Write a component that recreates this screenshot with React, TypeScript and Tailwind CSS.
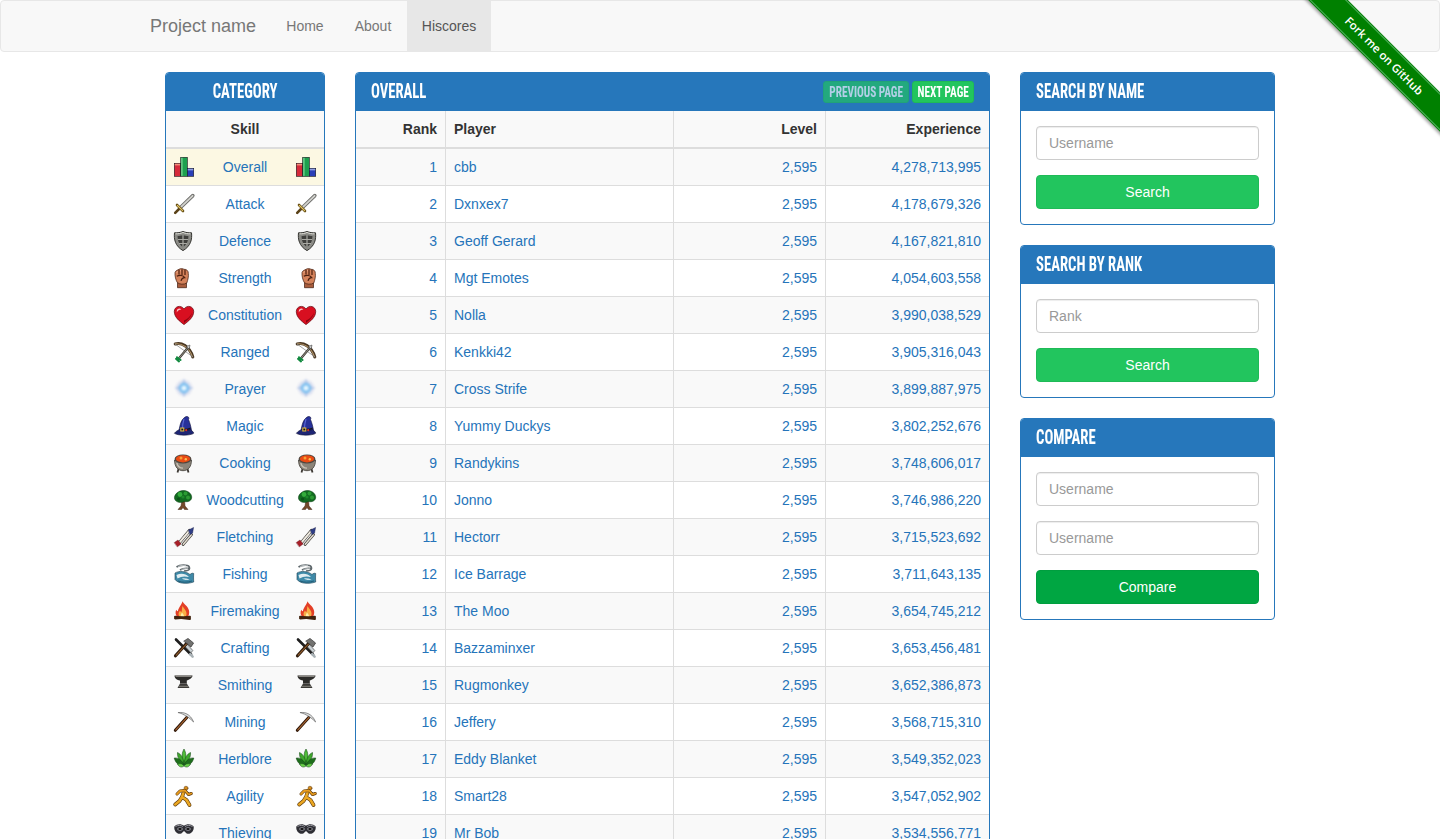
import React from "react";

type IconDef = { w: number; art: React.ReactNode };

// small game style skill icons, drawn on a 20px high box
const icons: Record<string, IconDef> = {
  Overall: {
    w: 20,
    art: (
      <g stroke="#14141c" strokeWidth="0.6">
        <rect x="0.3" y="6.3" width="6.4" height="13" fill="#d62a3a" />
        <rect x="0.8" y="6.8" width="5.4" height="1.6" fill="#f0907a" stroke="none" />
        <rect x="6.7" y="0.3" width="6.6" height="19" fill="#1da04f" />
        <rect x="7.2" y="0.8" width="1.4" height="18" fill="#72cf8e" stroke="none" />
        <rect x="13.3" y="11.3" width="6.4" height="8" fill="#2a3fb8" />
        <rect x="13.8" y="11.8" width="5.4" height="1.6" fill="#8f9ee2" stroke="none" />
      </g>
    ),
  },
  Attack: {
    w: 20,
    art: (
      <g strokeLinecap="round">
        <path d="M6 14 18.8 1.6" stroke="#6f6f6c" strokeWidth="3.6" />
        <path d="M6.3 13.7 18.6 1.8" stroke="#d2d2cd" strokeWidth="1.8" />
        <path d="M3 11 9 17" stroke="#6b5218" strokeWidth="2.6" />
        <path d="M1.2 18.8 5.5 14.5" stroke="#5a4218" strokeWidth="2.6" />
        <path d="M3.4 11.5 8.6 16.6" stroke="#e1c565" strokeWidth="1.1" />
      </g>
    ),
  },
  Defence: {
    w: 18,
    art: (
      <g>
        <path d="M9 0.5C6.5 1.5 3.5 2 0.5 1.8 -0.2 8 1 15 9 19.6 17 15 18.2 8 17.5 1.8 14.5 2 11.5 1.5 9 0.5Z" fill="#8b8b86" stroke="#33332f" />
        <path d="M9 4C7 4.7 5.5 5.1 3.6 5.1 3.6 9 4.6 13.5 9 16.3 13.4 13.5 14.4 9 14.4 5.1 12.5 5.1 11 4.7 9 4Z" fill="#3f3f3c" />
        <path d="M9 4V16M4 8.5H14M5 12.5H13" stroke="#aaaaa4" strokeWidth="1.2" />
        <path d="M1.5 2.8C4 3 7 2.4 9 1.4 11 2.4 14 3 16.5 2.8" fill="none" stroke="#dcdcd6" strokeWidth="1" />
      </g>
    ),
  },
  Strength: {
    w: 15,
    art: (
      <g stroke="#3f1d10" strokeWidth="0.7">
        <path d="M3.5 14.5V19.7H12.5V15Z" fill="#a85d3d" />
        <path d="M1 4.5C1.5 2.5 4 2 5 1.3 6.5 0.2 9 0.6 10 1.3 12.5 1.1 14.6 3 14.3 5.5 14.8 8 14 11.5 12.8 15 10 16.8 5.5 16.5 3.3 14.5 1.8 12 0.7 8 1 4.5Z" fill="#d4825b" />
        <path d="M5 1.8V6.5M8 1.3V7M11 1.8V7M2.8 8.3C5.5 6.8 9.2 7.3 10.7 9.6 8.5 9.5 7.5 11 7 12.8" fill="none" stroke="#4c2010" strokeWidth="1.2" />
        <path d="M2.5 4.5 4 3.5M6 3 7 2.6" stroke="#efb898" strokeWidth="0.8" fill="none" />
      </g>
    ),
  },
  Constitution: {
    w: 20,
    art: (
      <g>
        <path d="M10 19.6C6 16.5 0.3 12.5 0.3 6.5 0.3 1.3 7 -0.6 10 4 13 -0.6 19.7 1.3 19.7 6.5 19.7 12.5 14 16.5 10 19.6Z" fill="#d80f20" stroke="#5f050d" strokeWidth="0.7" />
        <path d="M2.8 5.8C3.3 3.4 6 2.8 7.4 4.5 5.6 4.4 4 5 2.8 7.5Z" fill="#fbc6c9" />
        <path d="M10 18C13.5 15 17.2 12 18 7.8 16.5 11.5 13.5 14 10 15.5Z" fill="#84060f" />
      </g>
    ),
  },
  Ranged: {
    w: 20,
    art: (
      <g fill="none" strokeLinecap="round">
        <path d="M1.2 2C7 0 15.5 4 18.8 15" stroke="#4a3722" strokeWidth="3" />
        <path d="M1.5 1.8C7 1 14.8 4.5 18.4 14.6" stroke="#b3966a" strokeWidth="1.1" />
        <path d="M1 2 19 15" stroke="#8d8d8d" strokeWidth="0.8" />
        <path d="M4 17.5 14.5 5" stroke="#3e3b35" strokeWidth="2.2" />
        <path d="M4.4 17 14.2 5.4" stroke="#b5b0a5" strokeWidth="0.7" />
        <path d="M2 16.8 5 19.4M3 15.2 6.6 18" stroke="#128a3f" strokeWidth="2" />
        <path d="M12.5 4.6 16 3 15.2 7Z" fill="#cfcfcf" stroke="#333" strokeWidth="0.5" />
      </g>
    ),
  },
  Prayer: {
    w: 20,
    art: (
      <g className="blur-[1px]">
        <circle cx="10" cy="9" r="8" fill="#dde1f0" />
        <path d="M10 -0.5 12.8 6.2 19.5 9 12.8 11.8 10 18.5 7.2 11.8 0.5 9 7.2 6.2Z" fill="#b4c8e8" />
        <circle cx="10" cy="9" r="5.2" fill="#7ec0f0" />
        <circle cx="10" cy="9" r="2.6" fill="#e6f6ff" />
      </g>
    ),
  },
  Magic: {
    w: 20,
    art: (
      <g>
        <path d="M5 14.5C6 9 7 3 12 0.6 14.5 0 15.5 2 14.5 3.5 16 7 17 11 17.5 14.5Z" fill="#27319a" stroke="#10133d" strokeWidth="0.6" />
        <path d="M10 3C9 6.5 8.5 9 8.5 12" fill="none" stroke="#5a69d2" strokeWidth="1.1" />
        <path d="M0.4 17.3C2 15 4 14.5 5.5 13.5 9 15 13.5 15 16.5 13.5 18 15 19.9 16 19.6 17.3 17 19.6 4 19.9 0.4 17.3Z" fill="#1e2675" stroke="#0b0d30" strokeWidth="0.6" />
        <path d="M6 13.2C9 14.8 13 14.8 16.5 13V11.5C13 13.2 9 13.2 6.5 11.8Z" fill="#15151f" />
        <rect x="6.8" y="12" width="3" height="3" fill="none" stroke="#e8c23a" strokeWidth="1" />
        <circle cx="12.2" cy="14.2" r="1.1" fill="#d32f2a" />
      </g>
    ),
  },
  Cooking: {
    w: 18,
    art: (
      <g>
        <path d="M3.5 19.5 4.5 16M13.5 16 14.5 19.5" stroke="#3c3833" strokeWidth="1.8" />
        <path d="M0.5 7C0.5 14 4 17.7 9 17.7 14 17.7 17.5 14 17.5 7Z" fill="#8b8479" stroke="#34302b" strokeWidth="0.7" />
        <path d="M2.8 10C3.8 13.5 6 15.2 9 15.2" stroke="#c9c2b6" strokeWidth="1.3" fill="none" />
        <ellipse cx="9" cy="6" rx="8.4" ry="4.6" fill="#4b4640" />
        <ellipse cx="9" cy="5.8" rx="7.2" ry="3.6" fill="#ea4b14" />
        <circle cx="7" cy="5" r="1.5" fill="#f7a035" />
        <circle cx="11.8" cy="6.3" r="1.2" fill="#fac050" />
      </g>
    ),
  },
  Woodcutting: {
    w: 18,
    art: (
      <g>
        <path d="M8 10 7 16 4 19.5H7.5L9 17.5 10.5 19.5H14L11 16 10.5 10Z" fill="#74492a" stroke="#3d2412" strokeWidth="0.5" />
        <path d="M9 0.5C13 0.3 17.5 3 17.7 7 18 10.5 14 12.5 10.5 11.5 7 13.2 2 12.7 0.6 9 -0.5 5 4 0.7 9 0.5Z" fill="#126a20" stroke="#0a3a12" strokeWidth="0.5" />
        <circle cx="6" cy="4.5" r="2.4" fill="#34ac3c" />
        <circle cx="11.5" cy="3.6" r="2" fill="#2b9c33" />
        <circle cx="14" cy="7.5" r="2" fill="#2d9a33" />
        <circle cx="9" cy="7" r="1.6" fill="#1d8a2a" />
        <circle cx="4.5" cy="9" r="1.6" fill="#0b5318" />
      </g>
    ),
  },
  Fletching: {
    w: 20,
    art: (
      <g strokeLinecap="round">
        <path d="M5.5 15.5 15.5 3.5" stroke="#45423d" strokeWidth="3.2" />
        <path d="M5.8 15.2 15.3 3.8" stroke="#efeae0" strokeWidth="2" />
        <path d="M9 17.5 17.5 7.5" stroke="#45423d" strokeWidth="2.8" />
        <path d="M9.3 17.2 17.2 7.9" stroke="#e2dccf" strokeWidth="1.5" />
        <path d="M0.4 15.5 4 13 7 17 3.5 19.7Z" fill="#a81f28" stroke="#5b0f14" strokeWidth="0.4" />
        <path d="M14.5 3 19.6 0.4 18.6 6 16 7.5Z" fill="#2e3d86" stroke="#161d45" strokeWidth="0.4" />
      </g>
    ),
  },
  Fishing: {
    w: 20,
    art: (
      <g>
        <path d="M1 9C5 6.5 12 7 16 10.5 17.5 9 19 9 19.7 9.5 19.5 13 19.5 15 19.7 18 12 20.5 4 19.5 1 15.5Z" fill="#3f8aa8" stroke="#173e52" strokeWidth="0.6" />
        <path d="M2.5 11C7 9 11.5 9.5 15 13 10 11.8 7 12.5 3.5 14.5Z" fill="#e2edf1" />
        <path d="M8 14.5C10 14 13 14.5 15.5 15.5 12.5 16.5 10 16 8 14.5Z" fill="#cfe2e9" />
        <path d="M4 17C8 18.6 13 18.6 18 17" fill="none" stroke="#1f5d78" strokeWidth="1" />
        <path d="M2.5 3C6 0.5 10 1 13.5 1.5M6 6C9 4 12 4 15.5 4.5M13.5 1.5C15.5 2 15.5 3.5 15.5 4.5 15.5 6 13 7 10 7" fill="none" stroke="#5f686c" strokeWidth="1.7" />
        <path d="M4 2.5C6.5 1.2 9.5 1.3 12 1.7M7.5 5.5C9.5 4.6 12 4.5 14 4.8" fill="none" stroke="#dde1e3" strokeWidth="0.7" />
      </g>
    ),
  },
  Firemaking: {
    w: 17,
    art: (
      <g>
        <path d="M8.5 0.2C9.5 3 14 5 15 9.5 15.6 12 15 14.5 13.5 16H3.5C1.5 14.5 1 11.5 2.2 8.8 2.8 9.8 3.4 10.3 4 10.3 4 7 7.5 4 8.5 0.2Z" fill="#e33f27" />
        <path d="M8.5 5C10 8 13 10 12.5 13.5 12.3 15 11.5 16 10.5 16H6C4 14.5 4 11.5 6 9.5 6.5 10.8 7.2 11 7.8 10.5 7.8 9 8 7 8.5 5Z" fill="#f8ae46" />
        <path d="M8 11.5C9.2 13 10.5 14.5 9.8 16H7C6.3 14.5 7 13 8 11.5Z" fill="#fdeea8" />
        <path d="M1.2 17.2 15.8 16M1.2 16 15.8 17.8" stroke="#40220e" strokeWidth="2.4" strokeLinecap="round" />
      </g>
    ),
  },
  Crafting: {
    w: 20,
    art: (
      <g strokeLinecap="round">
        <path d="M2 1.5 17 16.5" stroke="#1e1e1e" strokeWidth="2.6" />
        <path d="M13.5 6.5 18.8 12.5 17 14.8 11.5 8.8Z" fill="#ccd3d6" stroke="#3c3c3c" strokeWidth="0.6" />
        <path d="M1.5 17.8 13 5" stroke="#2f1c0d" strokeWidth="3.2" />
        <path d="M2.2 17.2 13 5.5" stroke="#96602f" strokeWidth="1.1" />
        <path d="M10 3 14 0.4 19.6 5 17 9 14 6.5Z" fill="#727270" stroke="#1e1e1e" strokeWidth="0.6" />
        <path d="M16.2 16.2 18.6 18.6" stroke="#a9b2b6" strokeWidth="2.6" />
      </g>
    ),
  },
  Smithing: {
    w: 19,
    art: (
      <g>
        <path d="M0.5 0.5H18.5C18.5 3 15 5 12.8 5.5V8.5H6V5.5C3 5 0.5 3.5 0.5 0.5Z" fill="#2c2b29" />
        <path d="M1.5 1.3H17.5" stroke="#928f89" strokeWidth="1.2" />
        <path d="M6 8.5H12.8L15.5 13H3.5Z" fill="#3a3936" />
        <path d="M5 11.3H14" stroke="#85827b" strokeWidth="1" />
      </g>
    ),
  },
  Mining: {
    w: 20,
    art: (
      <g strokeLinecap="round">
        <path d="M1.3 18.3 13 5.2" stroke="#2e1608" strokeWidth="3" />
        <path d="M1.8 17.8 13 5.4" stroke="#a5632f" strokeWidth="1.2" />
        <path d="M4.5 0.6C10 -0.2 16.5 2 19.6 10 16 6.2 13.5 5 11.5 3.6 9.5 2.2 7 1.4 4.5 0.6Z" fill="#dfe1e1" stroke="#4c4c4c" strokeWidth="0.6" />
      </g>
    ),
  },
  Herblore: {
    w: 20,
    art: (
      <g stroke="#0d3d10" strokeWidth="0.5">
        <path d="M10 0C12 3.5 13 8 10 15 7 8 8 3.5 10 0Z" fill="#4fbb38" />
        <path d="M3.5 3.5C7 5 9.5 9 10 15.5 5.5 12.5 3 8 3.5 3.5Z" fill="#3fa82c" />
        <path d="M16.5 3.5C13 5 10.5 9 10 15.5 14.5 12.5 17 8 16.5 3.5Z" fill="#3fa82c" />
        <path d="M0.2 9C4 8.5 8 11 10 16 6 18 1.5 14.5 0.2 9Z" fill="#1f6e1c" />
        <path d="M19.8 9C16 8.5 12 11 10 16 14 18 18.5 14.5 19.8 9Z" fill="#1f6e1c" />
        <path d="M3.5 15C7 14 8.5 15 10 17 7.5 19 5 18 3.5 15ZM16.5 15C13 14 11.5 15 10 17 12.5 19 15 18 16.5 15Z" fill="#6ad14a" />
      </g>
    ),
  },
  Agility: {
    w: 18,
    art: (
      <g fill="none" strokeLinecap="round" strokeLinejoin="round">
        <circle cx="12" cy="2.2" r="2" fill="#d88d1a" stroke="#5a370c" strokeWidth="0.5" />
        <path d="M10 5 8 11 12.5 14 15.5 19M8 11 5.5 15 1.2 18.5" stroke="#5a370c" strokeWidth="3.8" />
        <path d="M10 5 8 11 12.5 14 15.5 19M8 11 5.5 15 1.2 18.5" stroke="#eba722" strokeWidth="2.5" />
        <path d="M3 8 6 5 11 4.5 14.5 8.5 17.3 7.5" stroke="#5a370c" strokeWidth="3" />
        <path d="M3 8 6 5 11 4.5 14.5 8.5 17.3 7.5" stroke="#e89c1e" strokeWidth="1.8" />
      </g>
    ),
  },
  Thieving: {
    w: 20,
    art: (
      <g>
        <path d="M0.3 3.5C3 0.8 7 0.6 10 2.8 13 0.6 17 0.8 19.7 3.5 20.2 8 17 11.3 13.5 10.7 11.5 10.2 11 8.2 10 8.2 9 8.2 8.5 10.2 6.5 10.7 3 11.3 -0.2 8 0.3 3.5Z" fill="#2f2f35" />
        <path d="M1.5 3.5C4 2 7 2 9 3.5M11 3.5C13 2 16 2 18.5 3.5" fill="none" stroke="#a3a3aa" strokeWidth="0.9" />
        <ellipse cx="6" cy="6" rx="2.8" ry="1.7" fill="#9a9aa2" />
        <ellipse cx="14" cy="6" rx="2.8" ry="1.7" fill="#9a9aa2" />
        <ellipse cx="6" cy="6" rx="1.8" ry="1" fill="#0d0d0d" />
        <ellipse cx="14" cy="6" rx="1.8" ry="1" fill="#0d0d0d" />
      </g>
    ),
  },
};

const players: [string, string][] = [
  ["cbb", "4,278,713,995"],
  ["Dxnxex7", "4,178,679,326"],
  ["Geoff Gerard", "4,167,821,810"],
  ["Mgt Emotes", "4,054,603,558"],
  ["Nolla", "3,990,038,529"],
  ["Kenkki42", "3,905,316,043"],
  ["Cross Strife", "3,899,887,975"],
  ["Yummy Duckys", "3,802,252,676"],
  ["Randykins", "3,748,606,017"],
  ["Jonno", "3,746,986,220"],
  ["Hectorr", "3,715,523,692"],
  ["Ice Barrage", "3,711,643,135"],
  ["The Moo", "3,654,745,212"],
  ["Bazzaminxer", "3,653,456,481"],
  ["Rugmonkey", "3,652,386,873"],
  ["Jeffery", "3,568,715,310"],
  ["Eddy Blanket", "3,549,352,023"],
  ["Smart28", "3,547,052,902"],
  ["Mr Bob", "3,534,556,771"],
];

// no Oswald here, a squeezed condensed face comes close
const headingFont = "font-['Roboto_Condensed','Liberation_Sans_Narrow','Liberation_Sans',sans-serif]";

const SkillIcon = ({ name }: { name: string }) => {
  const icon = icons[name];
  return (
    <svg width={icon.w} height={20} viewBox={`0 0 ${icon.w} 20`} className="block shrink-0 overflow-visible">
      {icon.art}
    </svg>
  );
};

const Panel = ({ className, children }: { className?: string; children: React.ReactNode }) => (
  <div className={`overflow-hidden rounded border border-[#2677bb] bg-white ${className ?? ""}`}>{children}</div>
);

const PanelHeading = ({ title, center }: { title: string; center?: boolean }) => (
  <h3
    className={`flex h-[38px] items-center bg-[#2677bb] px-[15px] pb-0.5 text-xl font-bold uppercase text-white ${headingFont} ${center ? "justify-center" : ""}`}
  >
    <span className={`inline-block scale-x-[0.735] whitespace-nowrap ${center ? "origin-center" : "origin-left"}`}>{title}</span>
  </h3>
);

const FormInput = ({ placeholder }: { placeholder: string }) => (
  <input
    placeholder={placeholder}
    className="mb-[15px] block h-[34px] w-full rounded border border-[#ccc] bg-white px-3 text-sm text-[#555] shadow-[inset_0_1px_1px_rgba(0,0,0,0.075)] outline-none placeholder:text-[#999]"
  />
);

const SearchForm = ({ title, inputs, button, dark }: { title: string; inputs: string[]; button: string; dark?: boolean }) => (
  <Panel>
    <PanelHeading title={title} />
    <div className="p-[15px]">
      {inputs.map((p, i) => (
        <FormInput key={i} placeholder={p} />
      ))}
      <button
        className={`block h-[34px] w-full rounded border text-sm text-white ${dark ? "border-[#009e3f] bg-[#00a642]" : "border-[#1fba57] bg-[#22c55e]"}`}
      >
        {button}
      </button>
    </div>
  </Panel>
);

const PageButton = ({ label, className }: { label: string; className: string }) => (
  <a className={`flex h-[22px] items-center justify-center rounded-[3px] border border-[#1fba57] bg-[#22c55e] ${className}`}>
    <span className="inline-block scale-x-[0.75] whitespace-nowrap">{label}</span>
  </a>
);

const App = () => {
  return (
    <div className="relative h-[839px] overflow-hidden bg-white font-['Liberation_Sans',Arial,sans-serif] text-sm leading-5 text-[#333]">
      <nav className="mb-5 h-[52px] rounded border border-[#e7e7e7] bg-[#f8f8f8]">
        <div className="mx-auto flex w-[1170px] px-[15px]">
          <a className="block w-[121px] py-[15px] text-lg leading-5 text-[#777]">Project name</a>
          <a className="block w-[68px] py-[15px] text-center text-[#777]">Home</a>
          <a className="block w-[68px] py-[15px] text-center text-[#777]">About</a>
          <a className="block w-[84px] bg-[#e7e7e7] py-[15px] text-center text-[#555]">Hiscores</a>
        </div>
      </nav>

      <div className="mx-auto flex w-[1110px] items-start gap-[30px]">
        <Panel className="w-[160px] shrink-0">
          <PanelHeading title="Category" center />
          <div className="h-[38px] border-b-2 border-[#ddd] bg-[#f9f9f9] py-2 text-center font-bold">Skill</div>
          {Object.keys(icons).map((name, i) => (
            <div
              key={name}
              className={`flex justify-between p-2 ${i > 0 ? "border-t border-[#ddd]" : ""} ${i === 0 ? "bg-[#fcf8e3]" : i % 2 === 0 ? "bg-[#f9f9f9]" : "bg-white"}`}
            >
              <SkillIcon name={name} />
              <a className="text-[#2574ba]">{name}</a>
              <SkillIcon name={name} />
            </div>
          ))}
        </Panel>

        <Panel className="w-[635px] shrink-0">
          <div className="flex h-[38px] items-center justify-between bg-[#2677bb] px-[15px]">
            <h3 className={`pb-0.5 text-xl font-bold uppercase text-white ${headingFont}`}>
              <span className="inline-block origin-left scale-x-[0.735]">Overall</span>
            </h3>
            <div className={`flex gap-[3px] text-[15px] font-bold uppercase text-white ${headingFont}`}>
              <PageButton label="Previous Page" className="w-[86px] opacity-65" />
              <PageButton label="Next Page" className="w-[62px]" />
            </div>
          </div>
          <table className="w-[633px] table-fixed border-separate border-spacing-0">
            <colgroup>
              <col className="w-[90px]" />
              <col className="w-[228px]" />
              <col className="w-[152px]" />
              <col className="w-[163px]" />
            </colgroup>
            <thead>
              <tr className="bg-[#f9f9f9]">
                <th className="border-r border-b-2 border-[#ddd] p-2 text-right font-bold">Rank</th>
                <th className="border-r border-b-2 border-[#ddd] p-2 text-left font-bold">Player</th>
                <th className="border-r border-b-2 border-[#ddd] p-2 text-right font-bold">Level</th>
                <th className="border-b-2 border-[#ddd] p-2 text-right font-bold">Experience</th>
              </tr>
            </thead>
            <tbody className="text-[#2574ba]">
              {players.map(([player, xp], i) => (
                <tr key={player} className={i % 2 === 0 ? "bg-[#f9f9f9]" : "bg-white"}>
                  <td className="border-r border-b border-[#ddd] p-2 text-right">{i + 1}</td>
                  <td className="border-r border-b border-[#ddd] p-2">{player}</td>
                  <td className="border-r border-b border-[#ddd] p-2 text-right">2,595</td>
                  <td className="border-b border-[#ddd] p-2 text-right">{xp}</td>
                </tr>
              ))}
            </tbody>
          </table>
        </Panel>

        <div className="flex w-[255px] shrink-0 flex-col gap-5">
          <SearchForm title="Search by name" inputs={["Username"]} button="Search" />
          <SearchForm title="Search by rank" inputs={["Rank"]} button="Search" />
          <SearchForm title="Compare" inputs={["Username", "Username"]} button="Compare" dark />
        </div>
      </div>

      {/* fork ribbon, lies over the navbar corner */}
      <div className="pointer-events-none absolute top-0 right-0 h-[150px] w-[150px] overflow-hidden">
        <a className="absolute top-[42px] left-[-16px] flex h-7 w-[220px] rotate-45 items-center justify-center bg-[#008000] font-['Open_Sans',sans-serif] text-[11.5px] font-semibold text-white shadow-[0_2px_3px_rgba(0,0,0,0.35)]">
          <span className="absolute inset-x-0 top-px h-px bg-[#4fae5f]" />
          <span className="absolute inset-x-0 bottom-px h-px bg-[#4fae5f]" />
          Fork me on GitHub
        </a>
      </div>
    </div>
  );
};

export default App;
